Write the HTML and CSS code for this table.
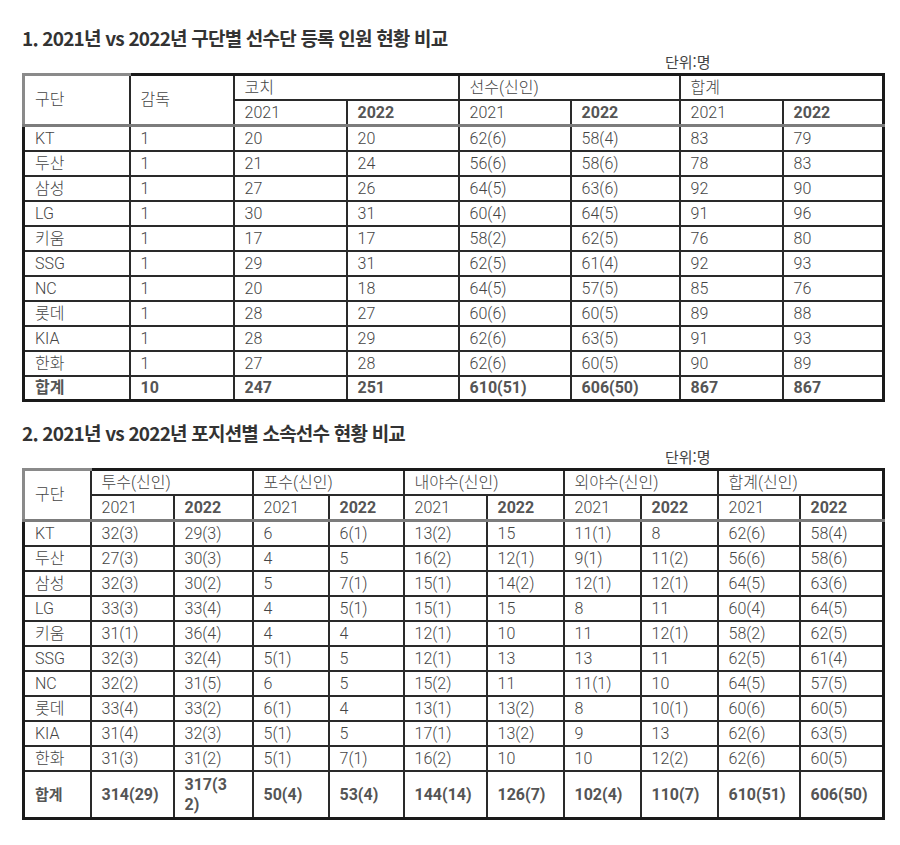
FILE: index.html
```html
<!DOCTYPE html>
<html lang="ko">
<head>
<meta charset="utf-8">
<title>구단별 선수단 등록 인원 현황 비교</title>
<link rel="stylesheet" href="styles.css">
</head>
<body>
<div class="page">
  <h2 class="title">1. 2021년 vs 2022년 구단별 선수단 등록 인원 현황 비교</h2>
  <div class="unit">단위:명</div>
  <table class="grid t1">
    <colgroup>
      <col style="width:106px"><col style="width:104px"><col style="width:113px"><col style="width:112px">
      <col style="width:112px"><col style="width:109px"><col style="width:103px"><col style="width:101px">
    </colgroup>
    <thead>
      <tr class="h1">
        <th rowspan="2" class="corner">구단</th>
        <th rowspan="2" class="rs">감독</th>
        <th colspan="2">코치</th>
        <th colspan="2">선수(신인)</th>
        <th colspan="2">합계</th>
      </tr>
      <tr class="h2">
        <th>2021</th><th class="b">2022</th>
        <th>2021</th><th class="b">2022</th>
        <th>2021</th><th class="b">2022</th>
      </tr>
    </thead>
    <tbody>
      <tr><td>KT</td><td>1</td><td>20</td><td>20</td><td>62(6)</td><td>58(4)</td><td>83</td><td>79</td></tr>
      <tr><td>두산</td><td>1</td><td>21</td><td>24</td><td>56(6)</td><td>58(6)</td><td>78</td><td>83</td></tr>
      <tr><td>삼성</td><td>1</td><td>27</td><td>26</td><td>64(5)</td><td>63(6)</td><td>92</td><td>90</td></tr>
      <tr><td>LG</td><td>1</td><td>30</td><td>31</td><td>60(4)</td><td>64(5)</td><td>91</td><td>96</td></tr>
      <tr><td>키움</td><td>1</td><td>17</td><td>17</td><td>58(2)</td><td>62(5)</td><td>76</td><td>80</td></tr>
      <tr><td>SSG</td><td>1</td><td>29</td><td>31</td><td>62(5)</td><td>61(4)</td><td>92</td><td>93</td></tr>
      <tr><td>NC</td><td>1</td><td>20</td><td>18</td><td>64(5)</td><td>57(5)</td><td>85</td><td>76</td></tr>
      <tr><td>롯데</td><td>1</td><td>28</td><td>27</td><td>60(6)</td><td>60(5)</td><td>89</td><td>88</td></tr>
      <tr><td>KIA</td><td>1</td><td>28</td><td>29</td><td>62(6)</td><td>63(5)</td><td>91</td><td>93</td></tr>
      <tr><td>한화</td><td>1</td><td>27</td><td>28</td><td>62(6)</td><td>60(5)</td><td>90</td><td>89</td></tr>
      <tr class="total t1total"><td>합계</td><td>10</td><td>247</td><td>251</td><td>610(51)</td><td>606(50)</td><td>867</td><td>867</td></tr>
    </tbody>
  </table>

  <h2 class="title second">2. 2021년 vs 2022년 포지션별 소속선수 현황 비교</h2>
  <div class="unit unit2">단위:명</div>
  <table class="grid t2">
    <colgroup>
      <col style="width:67px"><col style="width:83px"><col style="width:79px"><col style="width:76px">
      <col style="width:75px"><col style="width:83px"><col style="width:77px"><col style="width:77px">
      <col style="width:77px"><col style="width:82px"><col style="width:84px">
    </colgroup>
    <thead>
      <tr class="h1">
        <th rowspan="2" class="corner">구단</th>
        <th colspan="2">투수(신인)</th>
        <th colspan="2">포수(신인)</th>
        <th colspan="2">내야수(신인)</th>
        <th colspan="2">외야수(신인)</th>
        <th colspan="2">합계(신인)</th>
      </tr>
      <tr class="h2">
        <th>2021</th><th class="b">2022</th>
        <th>2021</th><th class="b">2022</th>
        <th>2021</th><th class="b">2022</th>
        <th>2021</th><th class="b">2022</th>
        <th>2021</th><th class="b">2022</th>
      </tr>
    </thead>
    <tbody>
      <tr><td>KT</td><td>32(3)</td><td>29(3)</td><td>6</td><td>6(1)</td><td>13(2)</td><td>15</td><td>11(1)</td><td>8</td><td>62(6)</td><td>58(4)</td></tr>
      <tr><td>두산</td><td>27(3)</td><td>30(3)</td><td>4</td><td>5</td><td>16(2)</td><td>12(1)</td><td>9(1)</td><td>11(2)</td><td>56(6)</td><td>58(6)</td></tr>
      <tr><td>삼성</td><td>32(3)</td><td>30(2)</td><td>5</td><td>7(1)</td><td>15(1)</td><td>14(2)</td><td>12(1)</td><td>12(1)</td><td>64(5)</td><td>63(6)</td></tr>
      <tr><td>LG</td><td>33(3)</td><td>33(4)</td><td>4</td><td>5(1)</td><td>15(1)</td><td>15</td><td>8</td><td>11</td><td>60(4)</td><td>64(5)</td></tr>
      <tr><td>키움</td><td>31(1)</td><td>36(4)</td><td>4</td><td>4</td><td>12(1)</td><td>10</td><td>11</td><td>12(1)</td><td>58(2)</td><td>62(5)</td></tr>
      <tr><td>SSG</td><td>32(3)</td><td>32(4)</td><td>5(1)</td><td>5</td><td>12(1)</td><td>13</td><td>13</td><td>11</td><td>62(5)</td><td>61(4)</td></tr>
      <tr><td>NC</td><td>32(2)</td><td>31(5)</td><td>6</td><td>5</td><td>15(2)</td><td>11</td><td>11(1)</td><td>10</td><td>64(5)</td><td>57(5)</td></tr>
      <tr><td>롯데</td><td>33(4)</td><td>33(2)</td><td>6(1)</td><td>4</td><td>13(1)</td><td>13(2)</td><td>8</td><td>10(1)</td><td>60(6)</td><td>60(5)</td></tr>
      <tr><td>KIA</td><td>31(4)</td><td>32(3)</td><td>5(1)</td><td>5</td><td>17(1)</td><td>13(2)</td><td>9</td><td>13</td><td>62(6)</td><td>63(5)</td></tr>
      <tr><td>한화</td><td>31(3)</td><td>31(2)</td><td>5(1)</td><td>7(1)</td><td>16(2)</td><td>10</td><td>10</td><td>12(2)</td><td>62(6)</td><td>60(5)</td></tr>
      <tr class="total t2total"><td class="lbl">합계</td><td>314(29)</td><td>317(3<br>2)</td><td>50(4)</td><td>53(4)</td><td>144(14)</td><td>126(7)</td><td>102(4)</td><td>110(7)</td><td>610(51)</td><td>606(50)</td></tr>
    </tbody>
  </table>
</div>
</body>
</html>
```

FILE: styles.css
```css
html, body {
  margin: 0;
  padding: 0;
  background: #ffffff;
}

.page {
  padding: 24px 0 0 22px;
  width: 860px;
  font-family: Roboto, "Noto Sans CJK KR", sans-serif;
  color: #444;
}

.title {
  margin: 0;
  font-family: "Noto Sans CJK KR", sans-serif;
  font-weight: 700;
  font-size: 19px;
  line-height: 28px;
  letter-spacing: -0.8px;
  color: #333;
}

.title.second {
  margin-top: 17px;
}

.unit {
  margin: 1px 0 2px 0;
  padding-left: 643px;
  font-family: "Noto Sans CJK KR", sans-serif;
  font-weight: 400;
  font-size: 15px;
  line-height: 18px;
  color: #444;
}

.unit.unit2 {
  margin-bottom: 2px;
}

.grid {
  border-collapse: collapse;
  table-layout: fixed;
  width: 860px;
  border: 3px solid #1a1a1a;
}

.grid th,
.grid td {
  border: 2px solid #2a2a2a;
  padding: 0 0 0 10px;
  text-align: left;
  vertical-align: middle;
  font-size: 16px;
  font-weight: 300;
  line-height: 20px;
  height: 23px;
  color: #444;
  white-space: nowrap;
  overflow: hidden;
}

.grid th.b {
  font-weight: 700;
  color: #555;
}

.grid thead tr.h2 th,
.grid thead th[rowspan] {
  border-bottom: 3px solid #7c7c7c;
}

.grid th.corner {
  border-left: 3px solid #8a8a8a;
  border-top: 3px solid #8a8a8a;
}

.grid tr.total td {
  font-weight: 700;
  color: #555;
}

.t1total td {
  height: 22px;
}

.t2total td {
  height: 45px;
  white-space: normal;
  line-height: 20px;
}

.t2total td.lbl {
  font-size: 15px;
}
```
